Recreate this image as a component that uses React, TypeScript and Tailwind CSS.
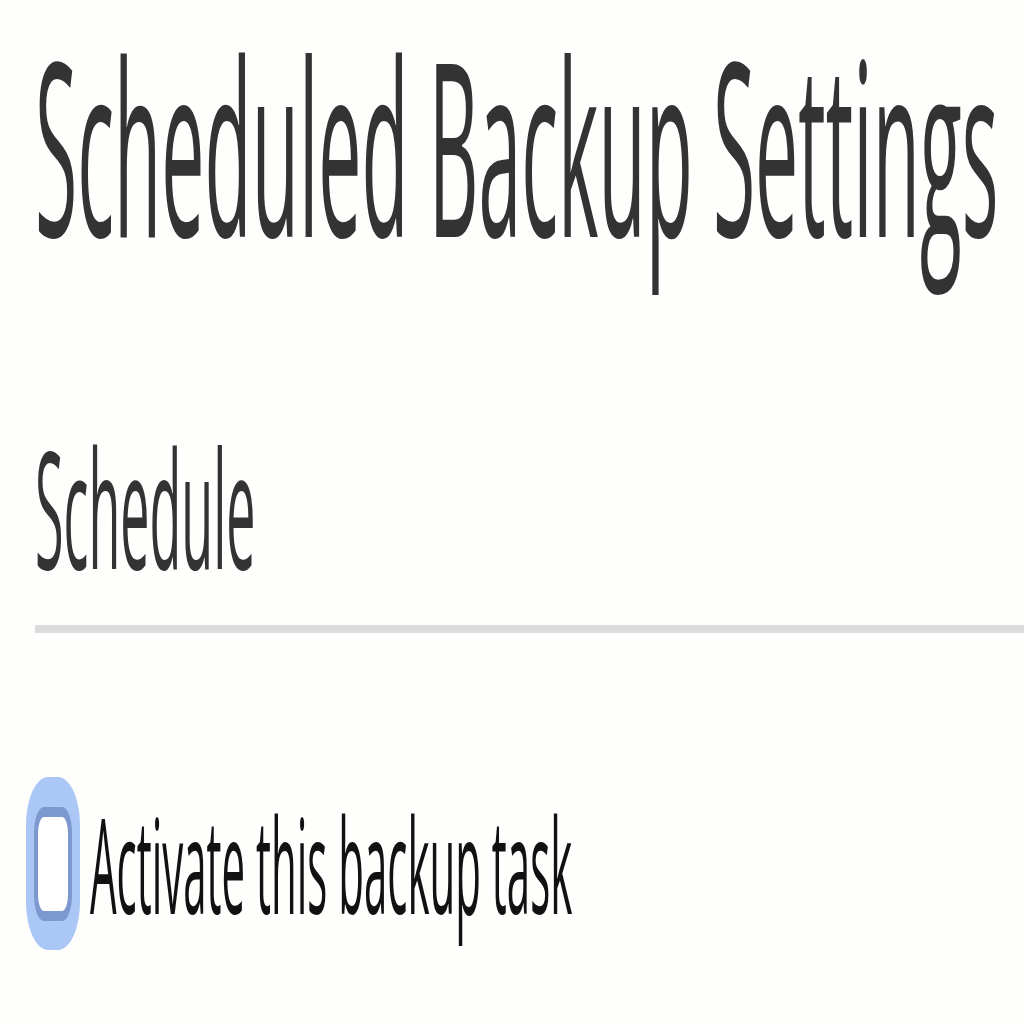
export default function App() {
  return (
    <div
      className="w-[1024px] min-h-[1024px] bg-[#fefefd] text-[#333333]"
      style={{ fontFamily: '"Open Sans", "Noto Sans", sans-serif' }}
    >
      {/* text is drawn at its true width and stretched tall, as in the reference */}
      <div className="pt-[23px] pl-[35px]">
        <h1 className="h-[242px] text-[77px] leading-none font-normal whitespace-nowrap">
          <span className="inline-block origin-top scale-y-[3.145]">Scheduled Backup Settings</span>
        </h1>
      </div>

      <div className="mt-[159px] pl-[35px]">
        <h2 className="h-[164px] text-[52px] leading-none font-normal whitespace-nowrap">
          <span className="inline-block origin-top scale-y-[3.145]">Schedule</span>
        </h2>
        <div className="mt-[37px] h-[8px] bg-[#dcdcdc]" />
      </div>

      <label className="mt-[144px] pl-[26px] flex items-center gap-[10px] whitespace-nowrap">
        <span className="shrink-0 w-[54px] h-[173px] rounded-[22px/48px] bg-[#abc7f5] flex items-center justify-center">
          <span className="w-[38px] h-[114px] rounded-[10px/26px] border-x-[4px] border-y-[10px] border-[#7d98cf] bg-white" />
        </span>
        <span className="block h-[132px] text-[42px] leading-none text-[#111111]">
          <span className="inline-block origin-top scale-y-[3.145]">Activate this backup task</span>
        </span>
      </label>
    </div>
  );
}
